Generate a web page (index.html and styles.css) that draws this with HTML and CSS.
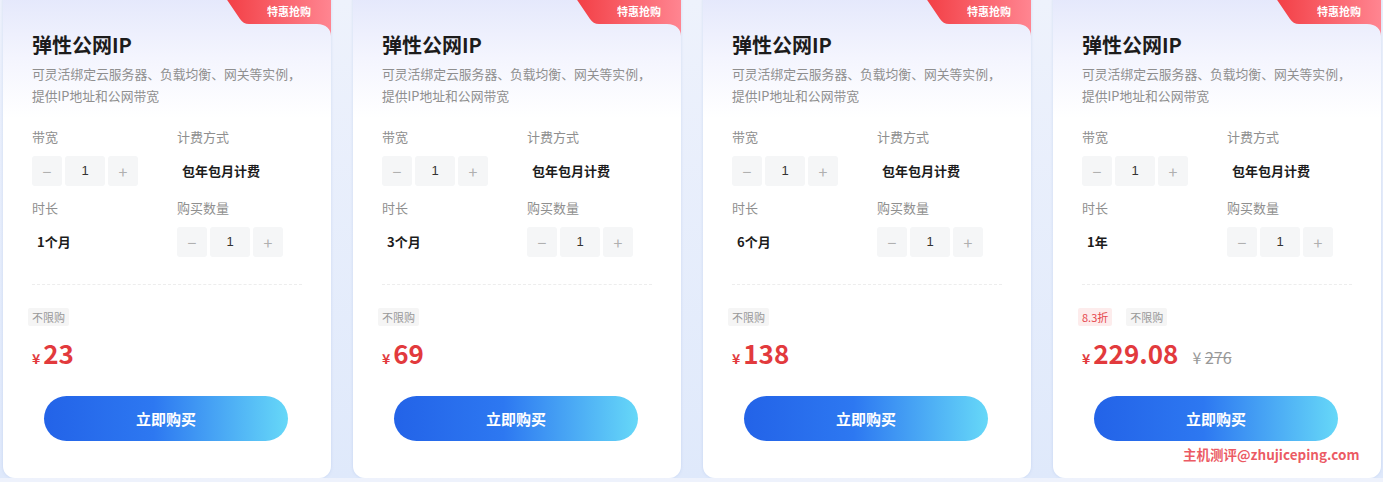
FILE: index.html
```html
<!DOCTYPE html>
<html lang="zh-CN">
<head>
    <meta charset="UTF-8">
    <meta name="viewport" content="width=device-width, initial-scale=1.0">
    <title>弹性公网IP</title>
    <link rel="stylesheet" href="styles.css">
</head>
<body>
    <div class="row">

        <div class="card">
            <div class="badge">
                <svg width="112" height="48" viewBox="0 0 112 48"><defs><linearGradient id="bg1" x1="0" x2="1" y1="0" y2="0"><stop offset="0" stop-color="#f23a40"/><stop offset="1" stop-color="#ff8591"/></linearGradient></defs><path d="M0 0 H112 V48 C112 41 107 36 98 36 H30 C26 36 23 34 21 31 Z" fill="url(#bg1)"/></svg>
                <span>特惠抢购</span>
            </div>
            <h2 class="title">弹性公网IP</h2>
            <p class="desc">可灵活绑定云服务器、负载均衡、网关等实例，<br>提供IP地址和公网带宽</p>
            <div class="fields">
                <div class="field">
                    <div class="label">带宽</div>
                    <div class="stepper"><span class="btn-step">−</span><span class="num">1</span><span class="btn-step">+</span></div>
                </div>
                <div class="field">
                    <div class="label">计费方式</div>
                    <div class="value">包年包月计费</div>
                </div>
                <div class="field">
                    <div class="label">时长</div>
                    <div class="value">1个月</div>
                </div>
                <div class="field">
                    <div class="label">购买数量</div>
                    <div class="stepper"><span class="btn-step">−</span><span class="num">1</span><span class="btn-step">+</span></div>
                </div>
            </div>
            <div class="divider"></div>
            <div class="tags"><span class="tag">不限购</span></div>
            <div class="price"><span class="yen">¥</span><span class="amount">23</span></div>
            <button type="button" class="buy">立即购买</button>
        </div>

        <div class="card">
            <div class="badge">
                <svg width="112" height="48" viewBox="0 0 112 48"><defs><linearGradient id="bg2" x1="0" x2="1" y1="0" y2="0"><stop offset="0" stop-color="#f23a40"/><stop offset="1" stop-color="#ff8591"/></linearGradient></defs><path d="M0 0 H112 V48 C112 41 107 36 98 36 H30 C26 36 23 34 21 31 Z" fill="url(#bg2)"/></svg>
                <span>特惠抢购</span>
            </div>
            <h2 class="title">弹性公网IP</h2>
            <p class="desc">可灵活绑定云服务器、负载均衡、网关等实例，<br>提供IP地址和公网带宽</p>
            <div class="fields">
                <div class="field">
                    <div class="label">带宽</div>
                    <div class="stepper"><span class="btn-step">−</span><span class="num">1</span><span class="btn-step">+</span></div>
                </div>
                <div class="field">
                    <div class="label">计费方式</div>
                    <div class="value">包年包月计费</div>
                </div>
                <div class="field">
                    <div class="label">时长</div>
                    <div class="value">3个月</div>
                </div>
                <div class="field">
                    <div class="label">购买数量</div>
                    <div class="stepper"><span class="btn-step">−</span><span class="num">1</span><span class="btn-step">+</span></div>
                </div>
            </div>
            <div class="divider"></div>
            <div class="tags"><span class="tag">不限购</span></div>
            <div class="price"><span class="yen">¥</span><span class="amount">69</span></div>
            <button type="button" class="buy">立即购买</button>
        </div>

        <div class="card">
            <div class="badge">
                <svg width="112" height="48" viewBox="0 0 112 48"><defs><linearGradient id="bg3" x1="0" x2="1" y1="0" y2="0"><stop offset="0" stop-color="#f23a40"/><stop offset="1" stop-color="#ff8591"/></linearGradient></defs><path d="M0 0 H112 V48 C112 41 107 36 98 36 H30 C26 36 23 34 21 31 Z" fill="url(#bg3)"/></svg>
                <span>特惠抢购</span>
            </div>
            <h2 class="title">弹性公网IP</h2>
            <p class="desc">可灵活绑定云服务器、负载均衡、网关等实例，<br>提供IP地址和公网带宽</p>
            <div class="fields">
                <div class="field">
                    <div class="label">带宽</div>
                    <div class="stepper"><span class="btn-step">−</span><span class="num">1</span><span class="btn-step">+</span></div>
                </div>
                <div class="field">
                    <div class="label">计费方式</div>
                    <div class="value">包年包月计费</div>
                </div>
                <div class="field">
                    <div class="label">时长</div>
                    <div class="value">6个月</div>
                </div>
                <div class="field">
                    <div class="label">购买数量</div>
                    <div class="stepper"><span class="btn-step">−</span><span class="num">1</span><span class="btn-step">+</span></div>
                </div>
            </div>
            <div class="divider"></div>
            <div class="tags"><span class="tag">不限购</span></div>
            <div class="price"><span class="yen">¥</span><span class="amount">138</span></div>
            <button type="button" class="buy">立即购买</button>
        </div>

        <div class="card">
            <div class="badge">
                <svg width="112" height="48" viewBox="0 0 112 48"><defs><linearGradient id="bg4" x1="0" x2="1" y1="0" y2="0"><stop offset="0" stop-color="#f23a40"/><stop offset="1" stop-color="#ff8591"/></linearGradient></defs><path d="M0 0 H112 V48 C112 41 107 36 98 36 H30 C26 36 23 34 21 31 Z" fill="url(#bg4)"/></svg>
                <span>特惠抢购</span>
            </div>
            <h2 class="title">弹性公网IP</h2>
            <p class="desc">可灵活绑定云服务器、负载均衡、网关等实例，<br>提供IP地址和公网带宽</p>
            <div class="fields">
                <div class="field">
                    <div class="label">带宽</div>
                    <div class="stepper"><span class="btn-step">−</span><span class="num">1</span><span class="btn-step">+</span></div>
                </div>
                <div class="field">
                    <div class="label">计费方式</div>
                    <div class="value">包年包月计费</div>
                </div>
                <div class="field">
                    <div class="label">时长</div>
                    <div class="value">1年</div>
                </div>
                <div class="field">
                    <div class="label">购买数量</div>
                    <div class="stepper"><span class="btn-step">−</span><span class="num">1</span><span class="btn-step">+</span></div>
                </div>
            </div>
            <div class="divider"></div>
            <div class="tags"><span class="tag tag-red">8.3折</span><span class="tag">不限购</span></div>
            <div class="price"><span class="yen">¥</span><span class="amount">229.08</span><span class="old">¥ <s>276</s></span></div>
            <button type="button" class="buy">立即购买</button>
            <div class="watermark">主机测评@zhujiceping.com</div>
        </div>

    </div>
</body>
</html>
```

FILE: styles.css
```css
/* 弹性公网IP 卡片 */
body {
    margin: 0;
    background: linear-gradient(180deg, #eef2fc 0, #dfe9fb 100%);
    font-family: "Noto Sans CJK SC", "Noto Sans", sans-serif;
    overflow: hidden;
}

.row {
    display: flex;
    gap: 22px;
    padding-left: 3px;
    margin-top: -12px;
}

.card {
    position: relative;
    width: 328px;
    flex: none;
    box-sizing: border-box;
    padding: 43px 29px 37px;
    background: linear-gradient(180deg, #e2e6fb 0, #f4f5fe 70px, #fff 130px);
    border-radius: 12px;
    box-shadow: 0 0 3px rgba(120, 150, 210, 0.25);
}

.badge {
    position: absolute;
    top: 0;
    right: 0;
    width: 112px;
    height: 48px;
}

.badge svg {
    display: block;
}

.badge span {
    position: absolute;
    top: 11px;
    left: 36px;
    width: 68px;
    text-align: center;
    font-size: 11px;
    line-height: 24px;
    font-weight: bold;
    color: #fff;
}

.title {
    margin: 0;
    font-size: 20px;
    line-height: 28px;
    font-weight: bold;
    color: #1c1c1c;
}

.desc {
    margin: 4px -14px 0 0;
    font-size: 12.8px;
    line-height: 22px;
    color: #8f8f8f;
    white-space: nowrap;
}

.fields {
    display: grid;
    grid-template-columns: 145px 1fr;
    row-gap: 12px;
    margin-top: 20px;
}

.label {
    font-size: 13px;
    line-height: 20px;
    color: #8f8f8f;
    margin-bottom: 9px;
}

.value {
    padding-left: 5px;
    font-size: 13px;
    line-height: 30px;
    font-weight: bold;
    color: #1c1c1c;
}

.stepper {
    display: flex;
    gap: 3px;
}

.stepper span {
    height: 30px;
    line-height: 30px;
    text-align: center;
    background: #f5f6f7;
    border-radius: 3px;
    font-size: 13px;
}

.btn-step {
    width: 30px;
    color: #b0b0b0;
    font-size: 16px !important;
}

.num {
    width: 40px;
    color: #333;
    font-family: "Liberation Sans", sans-serif;
}

.divider {
    margin-top: 27px;
    border-top: 1px dashed #ededed;
}

.tags {
    display: flex;
    gap: 14px;
    margin: 23px 0 0 -4px;
}

.tag {
    padding: 0 4px;
    height: 18px;
    line-height: 18px;
    font-size: 11px;
    color: #999;
    background: #f5f5f5;
    border-radius: 2px;
}

.tag-red {
    color: #e5484d;
    background: #fdecec;
}

.price {
    display: flex;
    align-items: baseline;
    margin-top: 10px;
    height: 34px;
    color: #e23a3d;
}

.yen {
    font-size: 14px;
    font-weight: bold;
    margin-right: 3px;
}

.amount {
    font-size: 26px;
    line-height: 34px;
    font-weight: bold;
}

.old {
    margin-left: 14px;
    font-size: 16px;
    color: #999;
}

.buy {
    display: block;
    width: 244px;
    height: 45px;
    margin: 26px 0 0 12px;
    border: 0;
    border-radius: 23px;
    background: linear-gradient(90deg, #2363e8 0, #2d78f1 45%, #66d8f8 100%);
    color: #fff;
    font-family: inherit;
    font-size: 15px;
    font-weight: bold;
}

.watermark {
    position: absolute;
    left: 130px;
    bottom: 14px;
    font-size: 13.5px;
    font-weight: bold;
    color: rgba(232, 60, 72, 0.85);
    white-space: nowrap;
}
```
